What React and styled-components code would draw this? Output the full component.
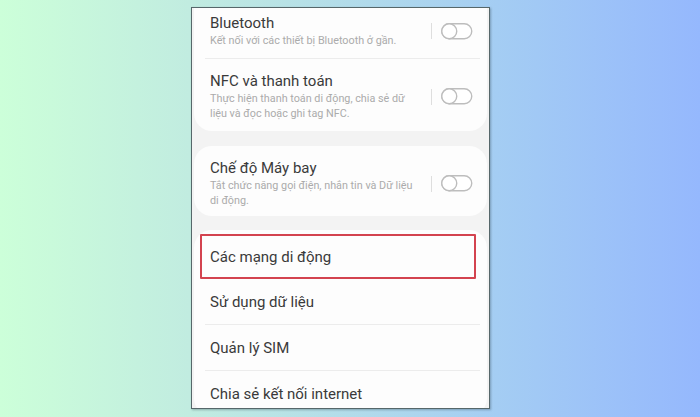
import React from "react";
import styled, { createGlobalStyle } from "styled-components";

const Global = createGlobalStyle`
  html, body { margin: 0; padding: 0; }
  body { font-family: Roboto, "Liberation Sans", Arial, sans-serif; }
`;

const Page = styled.div`
  width: 700px;
  height: 417px;
  box-sizing: border-box;
  padding: 7px 0 0 191px;
  background: linear-gradient(90deg, #ccffd9 0%, #c1ece0 27%, #a4cdf3 71%, #95b8fd 100%);
  overflow: hidden;
`;

const Phone = styled.div`
  width: 299px;
  height: 402px;
  box-sizing: border-box;
  border: 1px solid #56676a;
  box-shadow: 1px 1px 2px rgba(40, 60, 70, 0.35);
  background: #f3f3f3;
  overflow: hidden;
`;

const Scroll = styled.div`
  display: flex;
  flex-direction: column;
  margin-top: -7px;
  padding: 0 2px;
`;

const Group = styled.div`
  background: #fdfdfd;
  border-radius: ${(p) => (p.$top ? "0 0 18px 18px" : "18px")};
  margin-top: ${(p) => p.$mt || 0}px;
  padding-top: ${(p) => p.$padTop || 0}px;
  display: flex;
  flex-direction: column;
`;

const ToggleRow = styled.div`
  display: flex;
  align-items: center;
  padding: 13px 14px ${(p) => p.$pb || 10}px 16px;
`;

const TextCol = styled.div`
  flex: 1;
  display: flex;
  flex-direction: column;
`;

const Title = styled.div`
  font-size: 15px;
  line-height: 18px;
  color: #3a3a3a;
  white-space: nowrap;
`;

const Sub = styled.div`
  margin-top: 1px;
  font-size: 10.8px;
  line-height: 15px;
  color: #ababab;
`;

const SubLine = styled.div`
  white-space: nowrap;
`;

const Sep = styled.div`
  width: 1px;
  height: 16px;
  background: #dedede;
  margin-right: 9px;
`;

const Divider = styled.div`
  height: 1px;
  background: #ececec;
  margin: 0 7px 0 11px;
`;

const MenuRow = styled.div`
  position: relative;
  height: 45px;
  display: flex;
  align-items: center;
  padding: 0 16px;
  font-size: 15px;
  color: #3a3a3a;
`;

const Highlight = styled.div`
  position: absolute;
  left: 6px;
  right: 11px;
  top: 0;
  bottom: 0;
  border: 2px solid #d3434f;
  border-radius: 1px;
  pointer-events: none;
`;

const Toggle = () => (
  <svg width="32" height="17" viewBox="0 0 32 17">
    <rect x="0.75" y="0.75" width="30" height="15" rx="7.5" fill="#fff" stroke="#bdbdbd" strokeWidth="1.4" />
    <circle cx="8.25" cy="8.25" r="7.5" fill="#fff" stroke="#bdbdbd" strokeWidth="1.4" />
  </svg>
);

const SwitchItem = ({ title, lines, pb }) => (
  <ToggleRow $pb={pb}>
    <TextCol>
      <Title>{title}</Title>
      <Sub>
        {lines.map((l) => (
          <SubLine key={l}>{l}</SubLine>
        ))}
      </Sub>
    </TextCol>
    <Sep />
    <Toggle />
  </ToggleRow>
);

export default function App() {
  return (
    <>
      <Global />
      <Page>
        <Phone>
          <Scroll>
            <Group $top>
              <SwitchItem title="Bluetooth" lines={["Kết nối với các thiết bị Bluetooth ở gần."]} />
              <Divider />
              <SwitchItem
                title="NFC và thanh toán"
                lines={["Thực hiện thanh toán di động, chia sẻ dữ", "liệu và đọc hoặc ghi tag NFC."]}
              />
            </Group>
            <Group $mt={15}>
              <SwitchItem
                pb={8}
                title="Chế độ Máy bay"
                lines={["Tắt chức năng gọi điện, nhắn tin và Dữ liệu", "di động."]}
              />
            </Group>
            <Group $mt={14} $padTop={4}>
              <MenuRow>
                Các mạng di động
                <Highlight />
              </MenuRow>
              <MenuRow>Sử dụng dữ liệu</MenuRow>
              <Divider />
              <MenuRow>Quản lý SIM</MenuRow>
              <Divider />
              <MenuRow>Chia sẻ kết nối internet</MenuRow>
            </Group>
          </Scroll>
        </Phone>
      </Page>
    </>
  );
}
